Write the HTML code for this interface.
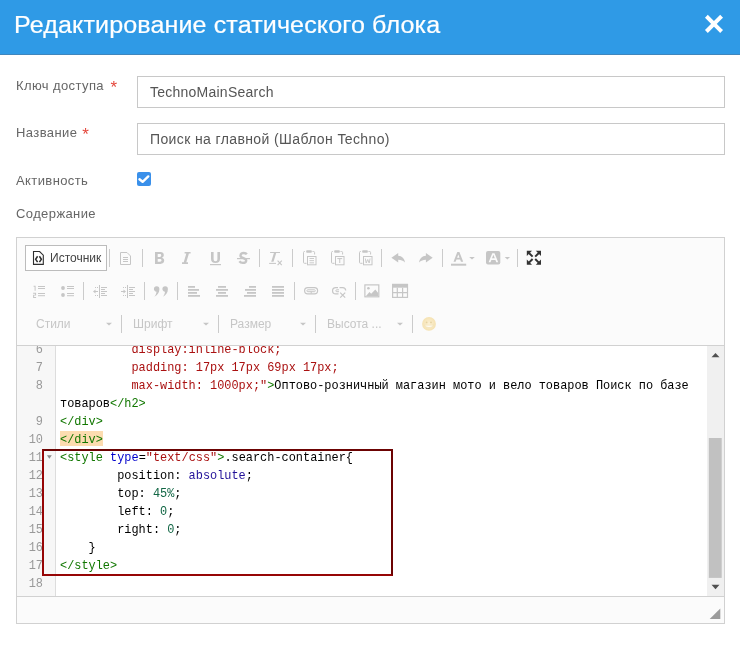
<!DOCTYPE html>
<html><head><meta charset="utf-8">
<style>
*{box-sizing:border-box;margin:0;padding:0}
html,body{width:740px;height:645px;overflow:hidden;background:#fff;font-family:"Liberation Sans",sans-serif;position:relative}
.abs{position:absolute}
#hdr{left:0;top:0;width:740px;height:55px;background:#2f9ae6;border-bottom:1px solid #3f86bd}
#title{left:14px;top:12px;color:#fff;font-size:23.3px;white-space:nowrap;letter-spacing:0.1px;-webkit-text-stroke:0.2px #fff;transform:scaleX(1.077);transform-origin:0 0}
.lbl{position:absolute;left:16px;color:#666;font-size:13px;white-space:nowrap;letter-spacing:0.4px}
.req{color:#e4473c;font-size:17px;letter-spacing:0;line-height:0;position:relative;top:2.5px}
.inp{position:absolute;left:137px;width:588px;height:32px;border:1px solid #c8c8c8;background:#fff;font-size:14px;color:#555;padding-left:12px;line-height:30px;white-space:nowrap}
#chk{left:137px;top:172px;width:14px;height:14px;background:#3a90ea;border-radius:2px}
#ed{left:16px;top:237px;width:709px;height:387px;border:1px solid #d1d1d1;background:#fbfbfb}
#tbb{left:17px;top:345px;width:707px;height:1px;background:#d1d1d1}
#code{left:17px;top:346px;width:707px;height:250px;background:#fff;overflow:hidden}
#gut{left:0;top:0;width:39px;height:250px;background:#f7f7f7;border-right:1px solid #ddd}
.ln{position:absolute;left:0;width:26px;text-align:right;font-family:"Liberation Mono",monospace;font-size:11.91px;line-height:18px;color:#999}
.cl{position:absolute;left:43px;font-family:"Liberation Mono",monospace;font-size:11.91px;line-height:18px;color:#000;white-space:pre}
.t{color:#170}.a{color:#00c}.s{color:#a11}.n{color:#164}.at{color:#219}
#sb{left:690px;top:0;width:17px;height:250px;background:#f0f0f0}
#foot{left:17px;top:596px;width:707px;height:27px;background:#fbfbfb;border-top:1px solid #d1d1d1}
#box{left:42px;top:449px;width:351px;height:127px;border:2px solid #960505;border-top-color:#6c0303;border-right-color:#6c0303;will-change:auto}
.srct{left:50px;top:251px;font-size:12px;color:#444;white-space:nowrap}
.combo{position:absolute;font-size:12px;color:#c6c6c6;white-space:nowrap;top:317px}
div{will-change:transform}
#ov{position:absolute;left:0;top:0}
</style></head><body>
<div id="hdr" class="abs">
  <div id="title" class="abs">Редактирование статического блока</div>
</div>

<div class="lbl" style="top:78px">Ключ доступа&nbsp; <span class="req" style="margin-left:-1.5px">*</span></div>
<div class="inp" style="top:76px;letter-spacing:0.24px">TechnoMainSearch</div>
<div class="lbl" style="top:125px">Название <span class="req" style="margin-left:1px">*</span></div>
<div class="inp" style="top:123px;letter-spacing:0.38px">Поиск на главной (Шаблон Techno)</div>
<div class="lbl" style="top:173px">Активность</div>
<div id="chk" class="abs"></div>
<div class="lbl" style="top:206px">Содержание</div>

<div id="ed" class="abs"></div>
<div id="tbb" class="abs"></div>
<div class="abs" style="left:25px;top:245px;width:82px;height:26px;border:1px solid #bcbcbc;background:#fff"></div>
<div class="abs srct">Источник</div>
<div class="combo" style="left:36px">Стили</div>
<div class="combo" style="left:133px">Шрифт</div>
<div class="combo" style="left:230px">Размер</div>
<div class="combo" style="left:327px">Высота ...</div>

<div id="code" class="abs">
  <div id="gut" class="abs"></div>
  <div class="ln" style="top:-5px">6</div>
  <div class="ln" style="top:13px">7</div>
  <div class="ln" style="top:31px">8</div>
  <div class="ln" style="top:67px">9</div>
  <div class="ln" style="top:85px">10</div>
  <div class="ln" style="top:103px">11</div>
  <div class="ln" style="top:121px">12</div>
  <div class="ln" style="top:139px">13</div>
  <div class="ln" style="top:157px">14</div>
  <div class="ln" style="top:175px">15</div>
  <div class="ln" style="top:193px">16</div>
  <div class="ln" style="top:211px">17</div>
  <div class="ln" style="top:229px">18</div>
  <div class="cl" style="top:-5px"><span class="s">          display:inline-block;</span></div>
  <div class="cl" style="top:13px"><span class="s">          padding: 17px 17px 69px 17px;</span></div>
  <div class="cl" style="top:31px"><span class="s">          max-width: 1000px;"</span><span class="t">&gt;</span>Оптово-розничный магазин мото и вело товаров Поиск по базе</div>
  <div class="cl" style="top:49px">товаров<span class="t">&lt;/h2&gt;</span></div>
  <div class="cl" style="top:67px"><span class="t">&lt;/div&gt;</span></div>
  <div class="abs" style="left:43px;top:85px;width:43px;height:15px;background:#fcdcb0"></div>
  <div class="cl" style="top:85px"><span class="t">&lt;/div&gt;</span></div>
  <div class="cl" style="top:103px"><span class="t">&lt;style</span> <span class="a">type</span>=<span class="s">"text/css"</span><span class="t">&gt;</span>.search-container{</div>
  <div class="cl" style="top:121px">        position: <span class="at">absolute</span>;</div>
  <div class="cl" style="top:139px">        top: <span class="n">45%</span>;</div>
  <div class="cl" style="top:157px">        left: <span class="n">0</span>;</div>
  <div class="cl" style="top:175px">        right: <span class="n">0</span>;</div>
  <div class="cl" style="top:193px">    }</div>
  <div class="cl" style="top:211px"><span class="t">&lt;/style&gt;</span></div>
  <div id="sb" class="abs"></div>
</div>
<div id="foot" class="abs"></div>
<div id="box" class="abs"></div>

<svg id="ov" width="740" height="645" viewBox="0 0 740 645">
  <!-- close -->
  <path d="M707.8 17.65 L720.2 30.05 M720.2 17.65 L707.8 30.05" stroke="#fff" stroke-width="4" stroke-linecap="square"/>
  <!-- checkbox check -->
  <path d="M139.5 179.3 L142.6 181.8 L148.3 176.4" stroke="#fff" stroke-width="2.4" fill="none" stroke-linecap="round" stroke-linejoin="round"/>
  <!-- source icon -->
  <g stroke="#2e2e2e" fill="none">
    <path d="M33.5 251.5 H39.6 L43.3 255.2 V264.4 H33.5 Z" stroke-width="1.1"/>
    <path d="M37.6 256.3 L35.6 259.2 L37.6 262.1 M39.4 256.3 L41.4 259.2 L39.4 262.1" stroke-width="1.5"/>
  </g>
  <!-- separators -->
  <g fill="#cbcbcb">
    <rect x="109" y="249" width="1" height="18"/>
    <rect x="142" y="249" width="1" height="18"/>
    <rect x="259" y="249" width="1" height="18"/>
    <rect x="292" y="249" width="1" height="18"/>
    <rect x="381" y="249" width="1" height="18"/>
    <rect x="442" y="249" width="1" height="18"/>
    <rect x="517" y="249" width="1" height="18"/>
    <rect x="83" y="282" width="1" height="18"/>
    <rect x="144" y="282" width="1" height="18"/>
    <rect x="177" y="282" width="1" height="18"/>
    <rect x="294" y="282" width="1" height="18"/>
    <rect x="355" y="282" width="1" height="18"/>
    <rect x="121" y="315" width="1" height="18"/>
    <rect x="218" y="315" width="1" height="18"/>
    <rect x="315" y="315" width="1" height="18"/>
    <rect x="412" y="315" width="1" height="18"/>
  </g>
  <g fill="#c6c6c6" stroke="none">
    <!-- new page -->
    <path d="M120.5 252.5 H127 L130.5 256 V264.5 H120.5 Z" fill="none" stroke="#c6c6c6" stroke-width="1"/>
    <rect x="123" y="257" width="5" height="1"/>
    <rect x="123" y="259" width="5" height="1"/>
    <rect x="123" y="261" width="5" height="1"/>
    <!-- B -->
    <path fill-rule="evenodd" d="M155 252 H160.3 C162.6 252 163.8 253.2 163.8 255 C163.8 256.4 163 257.3 162 257.7 C163.3 258.1 164.2 259.1 164.2 260.6 C164.2 262.6 162.8 263.9 160.4 263.9 H155 Z M157.7 254.1 V256.9 H159.8 C160.7 256.9 161.2 256.4 161.2 255.5 C161.2 254.6 160.7 254.1 159.8 254.1 Z M157.7 258.9 V261.8 H160 C161 261.8 161.5 261.2 161.5 260.35 C161.5 259.5 161 258.9 160 258.9 Z"/>
    <!-- I -->
    <path d="M184.6 252 H190.6 V253.6 H188.9 L186.3 262.3 H188 V263.9 H182 V262.3 H183.7 L186.3 253.6 H184.6 Z"/>
    <!-- U -->
    <path d="M211 252 H213.6 V258.8 C213.6 260.6 214.3 261.2 215.5 261.2 C216.7 261.2 217.4 260.6 217.4 258.8 V252 H220 V258.8 C220 261.8 218.4 263.1 215.5 263.1 C212.6 263.1 211 261.8 211 258.8 Z"/>
    <rect x="210" y="264" width="11" height="1.2"/>
    <!-- S -->
    <path transform="matrix(1 0 -0.07 1 18.06 0)" d="M246.6 254.3 C245.8 253.3 244.7 253 243.4 253 C241.4 253 240.3 254 240.3 255.4 C240.3 258.8 246.4 257.6 246.4 260.7 C246.4 262.2 245 262.9 243.2 262.9 C241.6 262.9 240.4 262.3 239.6 261.3" fill="none" stroke="#c6c6c6" stroke-width="2.3"/>
    <rect x="237" y="258" width="13" height="1.2"/>
    <!-- Tx -->
    <path d="M270.1 252 H280 V253.1 H276.2 L273.5 261.8 H271.2 L273.9 253.1 H270.1 Z"/>
    <rect x="269.1" y="262.9" width="6.9" height="1"/>
    <path d="M277.6 260.6 L281.8 265.2 M281.8 260.6 L277.6 265.2" stroke="#c6c6c6" stroke-width="1.1"/>
  </g>
  <!-- paste icons -->
  <g fill="none" stroke="#c6c6c6" stroke-width="1">
    <path d="M305 251.5 H304.5 Q303.5 251.5 303.5 252.5 V262.3 Q303.5 263.3 304.5 263.3 H306.5"/>
    <path d="M312.5 251.5 H313.6 Q314.6 251.5 314.6 252.5 V254.5"/>
    <rect x="307.5" y="256.5" width="8.5" height="8.3"/>
    <path d="M333 251.5 H332.5 Q331.5 251.5 331.5 252.5 V262.3 Q331.5 263.3 332.5 263.3 H334.5"/>
    <path d="M340.5 251.5 H341.6 Q342.6 251.5 342.6 252.5 V254.5"/>
    <rect x="335.5" y="256.5" width="8.5" height="8.3"/>
    <path d="M361 251.5 H360.5 Q359.5 251.5 359.5 252.5 V262.3 Q359.5 263.3 360.5 263.3 H362.5"/>
    <path d="M368.5 251.5 H369.6 Q370.6 251.5 370.6 252.5 V254.5"/>
    <rect x="363.5" y="256.5" width="8.5" height="8.3"/>
    <path d="M365.3 258.5 L366.2 263 L367.7 259.5 L369.2 263 L370.1 258.5" stroke-width="0.9"/>
    <path d="M337.3 258.6 H342.2 M339.75 258.6 V263" stroke-width="1"/>
  </g>
  <g fill="#c6c6c6">
    <rect x="306.2" y="250.2" width="5.6" height="2.5" rx="0.8"/>
    <rect x="334.2" y="250.2" width="5.6" height="2.5" rx="0.8"/>
    <rect x="362.2" y="250.2" width="5.6" height="2.5" rx="0.8"/>
    <rect x="309.5" y="258" width="4.5" height="0.9"/>
    <rect x="309.5" y="260.2" width="4.5" height="0.9"/>
    <rect x="309.5" y="262.4" width="4.5" height="0.9"/>
    <!-- undo / redo -->
    <path d="M391.4 257.8 L398.2 253 V255.8 C402 256 404.5 258.5 405 262.5 C403.3 260.5 401 259.7 398.2 259.7 V262.5 Z"/>
    <path transform="translate(824.1 0) scale(-1 1)" d="M391.4 257.8 L398.2 253 V255.8 C402 256 404.5 258.5 405 262.5 C403.3 260.5 401 259.7 398.2 259.7 V262.5 Z"/>
    <!-- text color -->
    <path d="M457.3 251.9 H459.4 L463.2 261.8 H461 L460.1 259.4 H456.5 L455.6 261.8 H453.5 Z M457.1 257.7 H459.5 L458.3 254.4 Z"/>
    <rect x="451" y="263.7" width="15.2" height="2"/>
    <path d="M469.2 257 H474.8 L472 259.6 Z"/>
    <!-- bg color -->
    <rect x="486" y="251" width="14.3" height="13.4" rx="2"/>
    <path d="M504.7 257 H510 L507.35 259.6 Z"/>
    <!-- row2 numbered list -->
    <path d="M33.6 285.8 H35.6 V290.8 H34.6 V286.8 H33.6 Z"/>
    <path d="M33.1 292.8 H36.1 V295.6 H34.1 V296.9 H36.1 V297.9 H33.1 V294.8 H35.1 V293.8 H33.1 Z"/>
    <rect x="38" y="286" width="7" height="1"/>
    <rect x="38" y="288" width="7" height="1"/>
    <rect x="38" y="293" width="7" height="1"/>
    <rect x="38" y="295.2" width="7" height="1"/>
    <!-- bullets -->
    <circle cx="63" cy="288" r="1.9"/>
    <circle cx="63" cy="295" r="1.9"/>
    <rect x="67" y="286" width="7" height="1"/>
    <rect x="67" y="288" width="7" height="1"/>
    <rect x="67" y="293" width="7" height="1"/>
    <rect x="67" y="295.2" width="7" height="1"/>
    <!-- outdent -->
    <rect x="99" y="285" width="1" height="13"/>
    <rect x="101" y="287" width="6" height="1"/>
    <rect x="101" y="289" width="4" height="1"/>
    <rect x="101" y="291" width="6" height="1"/>
    <rect x="101" y="293" width="4" height="1"/>
    <rect x="101" y="295" width="6" height="1"/>
    <rect x="95" y="287" width="1" height="1"/><rect x="97" y="287" width="1" height="1"/>
    <rect x="95" y="295" width="1" height="1"/><rect x="97" y="295" width="1" height="1"/>
    <rect x="94" y="291" width="4" height="1"/>
    <path d="M93 291.5 L95.5 289.5 V293.5 Z"/>
    <!-- indent -->
    <rect x="127" y="285" width="1" height="13"/>
    <rect x="129" y="287" width="6" height="1"/>
    <rect x="129" y="289" width="4" height="1"/>
    <rect x="129" y="291" width="6" height="1"/>
    <rect x="129" y="293" width="4" height="1"/>
    <rect x="129" y="295" width="6" height="1"/>
    <rect x="123" y="287" width="1" height="1"/><rect x="125" y="287" width="1" height="1"/>
    <rect x="123" y="295" width="1" height="1"/><rect x="125" y="295" width="1" height="1"/>
    <rect x="121" y="291" width="4" height="1"/>
    <path d="M126 291.5 L123.5 289.5 V293.5 Z"/>
    <!-- quote -->
    <path d="M153.9 289 A2.75 2.75 0 1 1 159.4 289.2 C159.4 292.6 157.3 295.4 154.3 296.8 C155.6 295.2 156.4 293.5 156.5 291.7 C155 291.6 153.9 290.5 153.9 289 Z"/>
    <path d="M162.4 289 A2.75 2.75 0 1 1 167.9 289.2 C167.9 292.6 165.8 295.4 162.8 296.8 C164.1 295.2 164.9 293.5 165 291.7 C163.5 291.6 162.4 290.5 162.4 289 Z"/>
    <!-- align left -->
    <rect x="188" y="286" width="7" height="1.8"/>
    <rect x="188" y="289" width="11" height="1.8"/>
    <rect x="188" y="292" width="9" height="1.8"/>
    <rect x="188" y="295" width="12" height="1.8"/>
    <!-- center -->
    <rect x="218" y="286" width="8" height="1.8"/>
    <rect x="216" y="289" width="12" height="1.8"/>
    <rect x="218" y="292" width="8" height="1.8"/>
    <rect x="216" y="295" width="12" height="1.8"/>
    <!-- right -->
    <rect x="249" y="286" width="7" height="1.8"/>
    <rect x="245" y="289" width="11" height="1.8"/>
    <rect x="247" y="292" width="9" height="1.8"/>
    <rect x="244" y="295" width="12" height="1.8"/>
    <!-- justify -->
    <rect x="272" y="286" width="12" height="1.8"/>
    <rect x="272" y="289" width="12" height="1.8"/>
    <rect x="272" y="292" width="12" height="1.8"/>
    <rect x="272" y="295" width="12" height="1.8"/>
    <!-- image -->
    <path d="M366 295.9 L369.5 292 L371.2 293.7 L375.3 289.5 L378.2 293 V296 H366 Z"/>
    <circle cx="368.4" cy="288.3" r="1.3"/>
    <!-- table -->
    <rect x="392" y="283.9" width="16" height="3.8"/>
    <!-- row3 arrows -->
    <path d="M106 322.8 H112 L109 325.6 Z"/>
    <path d="M203 322.8 H209 L206 325.6 Z"/>
    <path d="M300 322.8 H306 L303 325.6 Z"/>
    <path d="M397 322.8 H403 L400 325.6 Z"/>
  </g>
  <g fill="none" stroke="#c6c6c6">
    <rect x="364.9" y="284.9" width="13.9" height="11.9" stroke-width="1.2"/>
    <rect x="392.6" y="284.5" width="14.9" height="12.9" stroke-width="1.2"/>
    <path d="M397.3 287.7 V297.4 M402.6 287.7 V297.4 M392.6 292.6 H407.5" stroke-width="1.2"/>
    <!-- link -->
    <rect x="304.6" y="287.6" width="13" height="6.3" rx="3.1" stroke-width="1.2"/>
    <rect x="306.9" y="289.8" width="8.4" height="1.9" rx="0.9" stroke-width="1"/>
    <path d="M311.2 291.5 V293.5" stroke-width="1"/>
    <!-- unlink -->
    <path d="M338 287.6 H335.7 A3.1 3.1 0 0 0 335.7 293.9 H338.5" stroke-width="1.2"/>
    <path d="M339 289.8 H336.8 A0.95 0.95 0 0 0 336.8 291.7 H339" stroke-width="1"/>
    <path d="M339.5 287.6 H342.6 A3.1 3.1 0 0 1 345.7 290.6" stroke-width="1.2"/>
    <path d="M340.2 292.6 L345.2 297.6 M345.2 292.6 L340.2 297.6" stroke-width="1.2"/>
  </g>
  <!-- bg color A -->
  <path d="M492.3 253.2 H494.5 L498.2 262.3 H496.3 L495.4 260 H491.4 L490.5 262.3 H488.6 Z M492 258.3 H494.8 L493.4 254.8 Z" fill="#fbfbfb"/>
  <!-- maximize -->
  <g fill="#333">
    <path d="M526.8 250.8 H532 L526.8 256 Z"/>
    <path d="M541 250.8 H535.8 L541 256 Z"/>
    <path d="M526.8 264.8 H532 L526.8 259.6 Z"/>
    <path d="M541 264.8 H535.8 L541 259.6 Z"/>
  </g>
  <path d="M528.5 252.5 L532.6 256.6 M539.3 252.5 L535.2 256.6 M528.5 263.1 L532.6 259 M539.3 263.1 L535.2 259" stroke="#333" stroke-width="2"/>
  <!-- smiley -->
  <defs><radialGradient id="sg"><stop offset="0" stop-color="#fcf1d6"/><stop offset="1" stop-color="#f5e2b2"/></radialGradient></defs><circle cx="429" cy="323.9" r="6.9" fill="url(#sg)"/>
  <circle cx="426.6" cy="322.4" r="0.9" fill="#e6d2a0"/>
  <circle cx="431" cy="322.4" r="0.9" fill="#e6d2a0"/>
  <path d="M424.3 325.2 Q429 330 433.7 325.2 Z" fill="#fefbf2" stroke="#eedcae" stroke-width="0.5"/>
  <!-- scrollbar arrows / thumb -->
  <path d="M711.5 357.3 H719.5 L715.5 353 Z" fill="#505050"/>
  <rect x="708.8" y="438" width="12.9" height="139.9" fill="#c1c1c1"/>
  <path d="M711.5 584.8 H719.5 L715.5 589.2 Z" fill="#505050"/>
  <!-- resize -->
  <path d="M720.3 608.5 V619 H709.7 Z" fill="#9c9c9c"/>
  <!-- fold marker -->
  <path d="M46.9 455.2 H51.8 L49.35 458.7 Z" fill="#8a8a8a"/>
</svg>
</body></html>
